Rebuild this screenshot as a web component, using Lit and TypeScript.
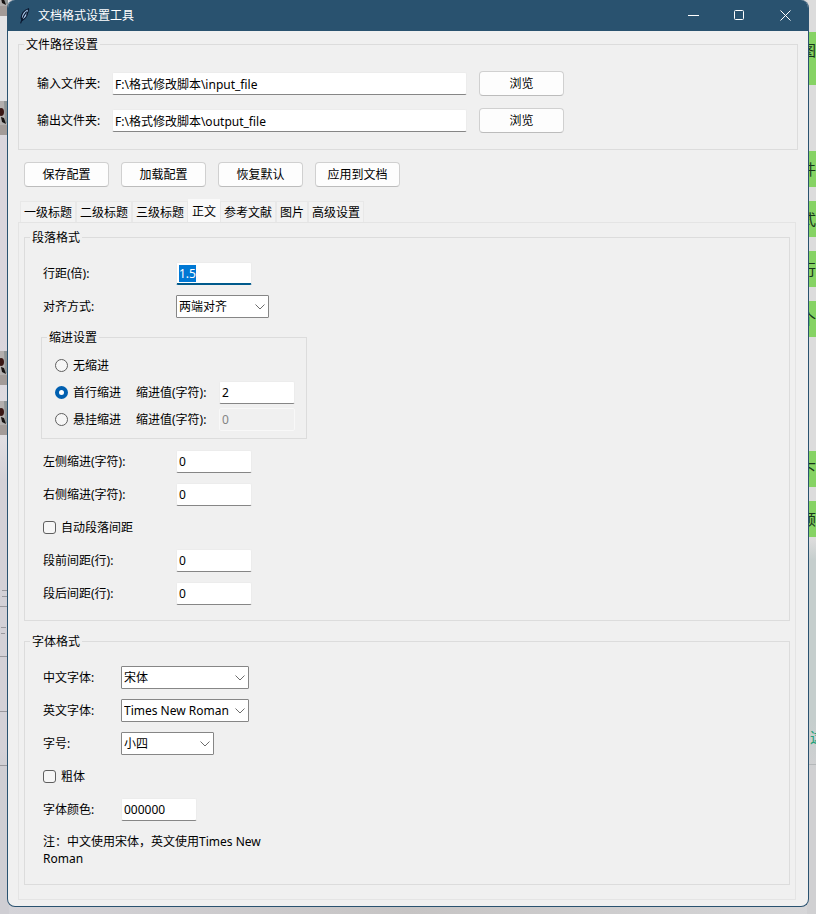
import { LitElement, html, css, svg } from "lit";
import { customElement, state } from "lit/decorators.js";

const chevron = html`<svg class="chevron" width="10" height="6" viewBox="0 0 10 6" aria-hidden="true">
  <path d="M0.5 0.5 L5 5 L9.5 0.5" fill="none" stroke="#6c6c6c" stroke-width="1" />
</svg>`;

const feather = html`<svg class="feather" width="12" height="16" viewBox="0 0 12 16" aria-hidden="true">
  <path d="M9.5 0.8 C6 2 2.6 5.5 2.2 10 L3.2 12.4 C6.2 10.5 8 8 8.4 6 L7.8 6 C9 4.5 9.8 2.8 9.5 0.8 Z" fill="#a9c8ea" stroke="#0a1830" stroke-width="1.2" />
  <path d="M7.6 3.6 C5.6 6 4 9 2.6 12.6 L1.6 15.4" fill="none" stroke="#0a1830" stroke-width="1.2" />
</svg>`;

const messages = [
  { text: "图", kind: "first" },
  { text: "件", kind: "spaced" },
  { text: "式", kind: "" },
  { text: "行", kind: "" },
  { text: "个", kind: "" },
  { text: "下", kind: "far" },
  { text: "顺", kind: "" },
];

const tabs = ["一级标题", "二级标题", "三级标题", "正文", "参考文献", "图片", "高级设置"];

@customElement("app-root")
export class AppRoot extends LitElement {
  @state() private tab = "正文";
  @state() private indent = "first";

  static styles = css`
    :host {
      display: block;
      position: relative;
      min-height: 100vh;
      overflow: hidden;
      box-sizing: border-box;
      padding: 0 7px 7px;
      background: linear-gradient(90deg, #d4d3d8, #c6c4c4 50%, #d6d6d8);
      color: #000;
      font: 12px/17px "Noto Sans", "Noto Sans CJK SC", sans-serif;
    }
    * { box-sizing: border-box; }
    input, select, button { font: inherit; color: inherit; margin: 0; }

    .strip { position: absolute; top: 0; bottom: 0; width: 9px; overflow: hidden; }
    .strip.left { left: 0; background: linear-gradient(#e4e4e6 0 100px, #d9d5dc 140px 340px, #e0dee2 440px, #d3d1d7 480px 750px, #cfced3 770px); }
    .strip.right { right: 0; background: linear-gradient(#dcdcdc 0 540px, #c5cecd 560px 720px, #d0d0d2 770px); }
    .bubble {
      display: flex;
      justify-content: flex-end;
      align-items: center;
      height: 36px;
      margin-top: 14px;
      background: #86d364;
      color: #17351a;
      font-size: 15px;
    }
    .bubble.first { height: 53px; margin-top: 32px; padding-bottom: 16px; }
    .bubble.spaced { margin-top: 66px; }
    .bubble.far { margin-top: 114px; }
    .note-link {
      height: 36px;
      margin-top: 192px;
      padding-left: 3px;
      border-bottom: 1px solid #b4b7b9;
      color: #21a179;
      font-size: 15px;
      white-space: nowrap;
    }
    .strip svg { display: block; }

    .window {
      position: relative;
      border: 1px solid #2a5270;
      border-top: 0;
      border-radius: 8px;
      overflow: hidden;
      background: #f0f0f0;
    }
    .titlebar {
      display: flex;
      align-items: center;
      height: 31px;
      padding-left: 11px;
      background: #29526f;
      color: #fff;
    }
    .titlebar h1 { flex: 1; margin: 0 0 0 7px; font-size: 12px; line-height: 17px; font-weight: 400; }
    .caption {
      display: grid;
      place-items: center;
      width: 46px;
      height: 31px;
      padding: 0;
      border: 0;
      background: none;
      color: #fff;
    }
    .content { padding: 5px 10px 6px; }

    fieldset { min-width: 0; margin: 0; padding: 0; border: 1px solid #dcdcdc; }
    legend { margin-left: 5px; padding: 0 2px; }

    .paths { display: grid; gap: 12px; padding: 18px 18px 16px; }
    .path { display: flex; align-items: center; }
    .path label { width: 75px; flex: none; }
    .path .text { flex: 0 1 355px; min-width: 0; margin-right: 12px; }

    .btn {
      flex: none;
      width: 85px;
      height: 25px;
      padding: 0;
      border: 1px solid #d0d0d0;
      border-bottom-color: #bcbcbc;
      border-radius: 4px;
      background: #fdfdfd;
    }
    .actions { display: flex; flex-wrap: wrap; gap: 12px; padding: 12px 6px; }

    .text {
      width: 76px;
      height: 23px;
      padding: 0 2px;
      border: 1px solid #ececec;
      border-bottom-color: #868686;
      border-radius: 2px;
      background: #fff;
      outline: none;
    }
    .text:focus { border-bottom: 2px solid #005a8c; }
    .text::selection { background: #0078d4; color: #fff; }
    .text:disabled { border-color: #f8f8f8; background: #f0f0f0; color: #838383; }

    .tabs { display: flex; align-items: flex-end; height: 23px; padding-left: 2px; }
    .tab {
      flex: none;
      height: 21px;
      padding: 0 3px;
      border: 1px solid #e8e8e8;
      border-bottom: 0;
      background: #f2f2f2;
    }
    .tab.active { height: 23px; border-color: #fafafa; background: #fafafa; }
    .pane {
      display: grid;
      gap: 12px;
      margin-right: 2px;
      padding: 6px 5px 14px;
      border: 1px solid #e4e4e4;
    }

    .form { display: grid; gap: 10px; padding: 16px 16px 15px; }
    .row { display: flex; align-items: center; height: 23px; padding-left: 2px; }
    .name { flex: none; width: 133px; }
    .fonts .name { width: 78px; }
    .indent { width: 266px; margin: 1px 0; }
    .options { display: grid; gap: 4px; padding: 8px 12px 7px; }
    .option { display: flex; align-items: center; height: 23px; }
    .option label { flex: none; }
    .option .radio { margin: 0 5px 0 1px; }
    .option .kind { width: 63px; }
    .option .amount { width: 83px; }

    .radio, .check { appearance: none; flex: none; width: 13px; height: 13px; border: 1px solid #5f5f5f; background: #f6f6f6; }
    .radio { border-radius: 50%; }
    .radio:checked { border: 4px solid #005fb0; background: #fff; }
    .check { margin-right: 5px; border-radius: 3px; }
    .check:checked { background: #005fb0; }

    .combo { display: grid; align-items: center; width: 93px; }
    .combo.wide { width: 128px; }
    .combo select {
      grid-area: 1 / 1;
      appearance: none;
      width: 100%;
      height: 23px;
      padding: 0 18px 0 2px;
      border: 1px solid #868686;
      border-radius: 1px;
      background: #fff;
      outline: none;
    }
    .chevron { grid-area: 1 / 1; justify-self: end; margin-right: 4px; pointer-events: none; }
    .hint { width: 230px; margin: 2px 0; padding-left: 2px; }
  `;

  firstUpdated() {
    const spacing = this.renderRoot.querySelector<HTMLInputElement>("#spacing");
    spacing?.focus();
    spacing?.select();
  }

  private entry(id: string, label: string, value: string) {
    return html`<div class="row">
      <label class="name" for=${id}>${label}</label>
      <input class="text" id=${id} type="text" .value=${value} />
    </div>`;
  }

  private combo(id: string, label: string, options: string[], wide = false) {
    return html`<div class="row">
      <label class="name" for=${id}>${label}</label>
      <span class="combo ${wide ? "wide" : ""}">
        <select id=${id}>${options.map((o) => html`<option>${o}</option>`)}</select>
        ${chevron}
      </span>
    </div>`;
  }

  private path(id: string, label: string, value: string) {
    return html`<div class="path">
      <label for=${id}>${label}</label>
      <input class="text" id=${id} type="text" .value=${value} />
      <button class="btn" type="button">浏览</button>
    </div>`;
  }

  private radio(value: string, label: string) {
    return html`<input class="radio" type="radio" name="indent" id="indent-${value}"
        .checked=${this.indent === value} @change=${() => (this.indent = value)} />
      <label class="kind" for="indent-${value}">${label}</label>`;
  }

  private amount(value: string, amount: string) {
    return html`<label class="amount" for="amount-${value}">缩进值(字符):</label>
      <input class="text" id="amount-${value}" type="text" .value=${amount} ?disabled=${this.indent !== value} />`;
  }

  private avatar(y: number) {
    return svg`<g transform="translate(0 ${y})">
      <rect width="8" height="34" fill="#b3afae" />
      <path d="M4 0 H8 V22 H5 Z" fill="#8f9596" />
      <rect y="24" width="8" height="10" fill="#a39b98" />
      <ellipse cx="1" cy="11" rx="3" ry="4" fill="#3a1714" />
      <path d="M1 16 L4 17 L6 23 L2 21 Z" fill="#15100f" />
    </g>`;
  }

  render() {
    return html`
      <div class="strip left" aria-hidden="true">
        <svg width="8" height="914" viewBox="0 0 8 914">
          ${[-18, 101, 351, 401].map((y) => this.avatar(y))}
          <path d="M2 590.5H7 M2 596.5H7 M0 606.5H8 M1 627.5H6 M1 633.5H5 M0 656.5H8 M0 711.5H8 M0 765.5H8" stroke="#9a999e" />
        </svg>
      </div>
      <div class="strip right" aria-hidden="true">
        ${messages.map((m) => html`<div class="bubble ${m.kind}">${m.text}</div>`)}
        <div class="note-link">这</div>
      </div>

      <main class="window">
        <header class="titlebar">
          ${feather}
          <h1>文档格式设置工具</h1>
          <button class="caption" type="button" aria-label="最小化">
            <svg width="11" height="11"><path d="M0 5.5H11" stroke="currentColor" /></svg>
          </button>
          <button class="caption" type="button" aria-label="最大化">
            <svg width="11" height="11"><rect x="0.5" y="0.5" width="9" height="9" rx="1" fill="none" stroke="currentColor" /></svg>
          </button>
          <button class="caption" type="button" aria-label="关闭">
            <svg width="11" height="11"><path d="M0.5 0.5L10.5 10.5M10.5 0.5L0.5 10.5" stroke="currentColor" /></svg>
          </button>
        </header>

        <div class="content">
          <fieldset>
            <legend>文件路径设置</legend>
            <div class="paths">
              ${this.path("input-dir", "输入文件夹:", "F:\\格式修改脚本\\input_file")}
              ${this.path("output-dir", "输出文件夹:", "F:\\格式修改脚本\\output_file")}
            </div>
          </fieldset>

          <div class="actions">
            ${["保存配置", "加载配置", "恢复默认", "应用到文档"].map((t) => html`<button class="btn" type="button">${t}</button>`)}
          </div>

          <div class="tabs" role="tablist">
            ${tabs.map((t) => html`<button class="tab ${t === this.tab ? "active" : ""}" type="button" role="tab"
              aria-selected=${t === this.tab} @click=${() => (this.tab = t)}>${t}</button>`)}
          </div>

          <section class="pane" role="tabpanel" aria-label=${this.tab}>
            <fieldset>
              <legend>段落格式</legend>
              <div class="form">
                ${this.entry("spacing", "行距(倍):", "1.5")}
                ${this.combo("align", "对齐方式:", ["两端对齐", "左对齐", "居中", "右对齐"])}
                <fieldset class="indent">
                  <legend>缩进设置</legend>
                  <div class="options">
                    <div class="option">${this.radio("none", "无缩进")}</div>
                    <div class="option">${this.radio("first", "首行缩进")}${this.amount("first", "2")}</div>
                    <div class="option">${this.radio("hanging", "悬挂缩进")}${this.amount("hanging", "0")}</div>
                  </div>
                </fieldset>
                ${this.entry("left", "左侧缩进(字符):", "0")}
                ${this.entry("right", "右侧缩进(字符):", "0")}
                <div class="row">
                  <input class="check" type="checkbox" id="auto" />
                  <label for="auto">自动段落间距</label>
                </div>
                ${this.entry("before", "段前间距(行):", "0")}
                ${this.entry("after", "段后间距(行):", "0")}
              </div>
            </fieldset>

            <fieldset>
              <legend>字体格式</legend>
              <div class="form fonts">
                ${this.combo("cn-font", "中文字体:", ["宋体", "黑体", "楷体"], true)}
                ${this.combo("en-font", "英文字体:", ["Times New Roman", "Arial"], true)}
                ${this.combo("size", "字号:", ["小四", "四号", "五号"])}
                <div class="row">
                  <input class="check" type="checkbox" id="bold" />
                  <label for="bold">粗体</label>
                </div>
                ${this.entry("color", "字体颜色:", "000000")}
                <p class="hint">注：中文使用宋体，英文使用Times New Roman</p>
              </div>
            </fieldset>
          </section>
        </div>
      </main>
    `;
  }
}
